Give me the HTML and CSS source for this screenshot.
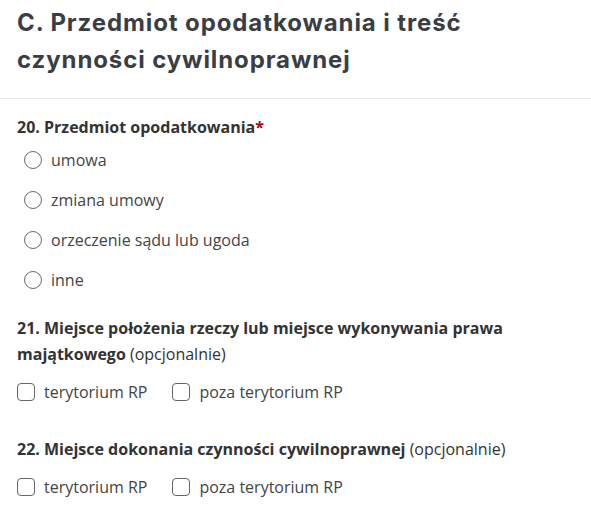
FILE: index.html
```html
<!DOCTYPE html>
<html lang="pl">
<head>
    <meta charset="UTF-8">
    <meta name="viewport" content="width=device-width, initial-scale=1.0">
    <title>Przedmiot opodatkowania</title>
    <link rel="stylesheet" href="styles.css">
</head>
<body>
    <div class="section-header">
        <h2>C. Przedmiot opodatkowania i treść czynności cywilnoprawnej</h2>
    </div>

    <div class="section-body">
        <div class="question">
            <div class="question-label">20. Przedmiot opodatkowania<span class="required">*</span></div>
            <div class="radio-list">
                <label class="option"><input type="radio" name="q20"><span class="radio"></span>umowa</label>
                <label class="option"><input type="radio" name="q20"><span class="radio"></span>zmiana umowy</label>
                <label class="option"><input type="radio" name="q20"><span class="radio"></span>orzeczenie sądu lub ugoda</label>
                <label class="option"><input type="radio" name="q20"><span class="radio"></span>inne</label>
            </div>
        </div>

        <div class="question">
            <div class="question-label">21. Miejsce położenia rzeczy lub miejsce wykonywania prawa majątkowego <span class="optional">(opcjonalnie)</span></div>
            <div class="check-row">
                <label class="option"><input type="checkbox"><span class="box"></span>terytorium RP</label>
                <label class="option"><input type="checkbox"><span class="box"></span>poza terytorium RP</label>
            </div>
        </div>

        <div class="question">
            <div class="question-label">22. Miejsce dokonania czynności cywilnoprawnej <span class="optional">(opcjonalnie)</span></div>
            <div class="check-row">
                <label class="option"><input type="checkbox"><span class="box"></span>terytorium RP</label>
                <label class="option"><input type="checkbox"><span class="box"></span>poza terytorium RP</label>
            </div>
        </div>
    </div>
</body>
</html>
```

FILE: styles.css
```css
body {
    margin: 0;
    font-family: 'Open Sans', 'Liberation Sans', sans-serif;
    color: #333;
    background: #fff;
}

.section-header {
    padding: 4px 17px 0;
    height: 94px;
    border-bottom: 1px solid #e8e8e8;
}

.section-header h2 {
    margin: 0;
    max-width: 480px;
    font-family: Inter, 'Liberation Sans', sans-serif;
    font-size: 24px;
    font-weight: 700;
    letter-spacing: 0.9px;
    line-height: 37px;
    color: #3a3e44;
}

.section-body {
    padding: 15px 17px 0;
}

.question {
    margin-bottom: 33px;
}

.question:first-child {
    margin-bottom: 23px;
}

.question-label {
    font-size: 16px;
    font-weight: 700;
    line-height: 26px;
    color: #333;
    max-width: 520px;
}

.required {
    color: #b30000;
}

.optional {
    font-weight: 400;
}

.option {
    display: flex;
    align-items: center;
    font-size: 16px;
    color: #444;
    cursor: pointer;
}

.option input {
    display: none;
}

.radio-list {
    display: flex;
    flex-direction: column;
    gap: 16px;
    padding: 8px 0 0 7px;
}

.radio-list .option {
    height: 24px;
}

.radio {
    width: 18px;
    height: 18px;
    border: 1px solid #666;
    border-radius: 50%;
    margin-right: 9px;
    box-sizing: border-box;
}

.check-row {
    display: flex;
    gap: 25px;
    padding-top: 14px;
}

.box {
    width: 18px;
    height: 18px;
    border: 1px solid #666;
    border-radius: 4px;
    margin-right: 9px;
    box-sizing: border-box;
}
```
